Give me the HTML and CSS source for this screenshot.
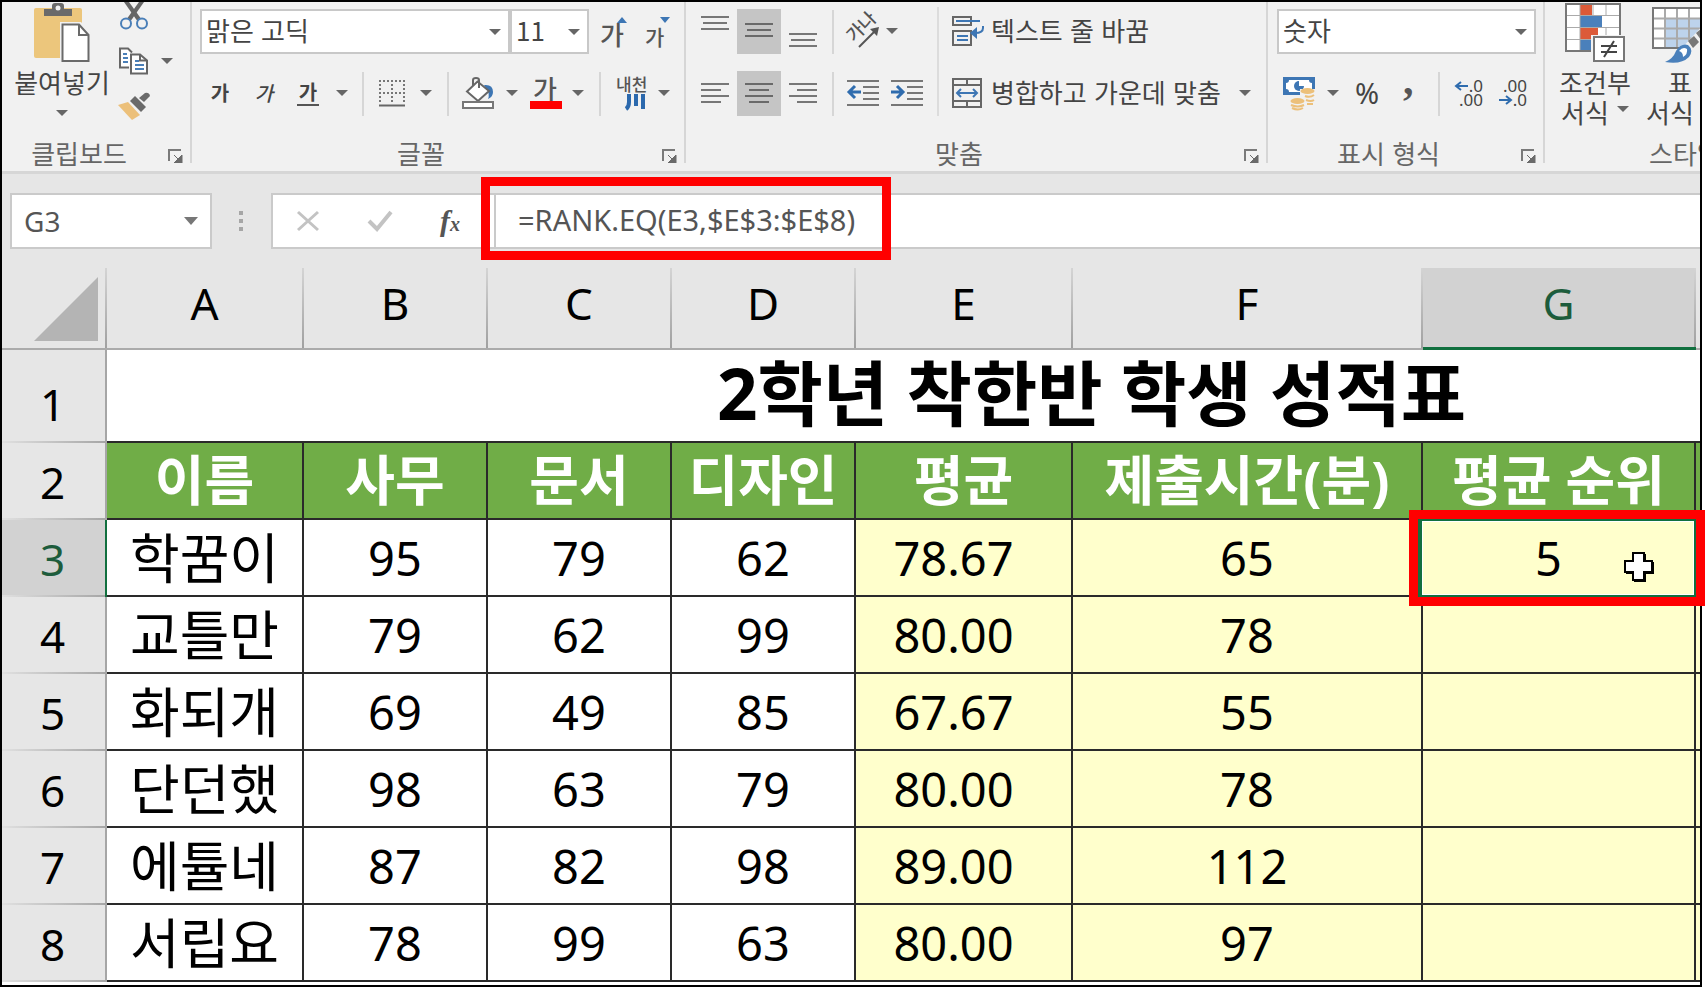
FILE: index.html
```html
<!DOCTYPE html>
<html lang="ko">
<head>
<meta charset="utf-8">
<title>2학년 착한반 학생 성적표</title>
<link rel="stylesheet" href="styles.css">
</head>
<body>
<svg class="defs" aria-hidden="true">
  <symbol id="caret" viewBox="0 0 12 6"><path d="M0 0h12l-6 6z" fill="#666"/></symbol>
  <symbol id="launcher" viewBox="0 0 15 14"><path d="M1 12V1h12" fill="none" stroke="#7a7a7a" stroke-width="2"/><path d="M6 6l6 6M14 6v8H6z" fill="#6a6a6a" stroke="#6a6a6a"/></symbol>
</svg>
<main class="window">
  <header class="ribbon">
    <section class="group group-clipboard">
      <div class="group-body">
        <button class="big paste">
          <svg width="56" height="60" viewBox="0 0 56 60">
            <rect x="0" y="6" width="48" height="50" rx="2" fill="#ecc67c"/>
            <path d="M10 14V7h8V4q0-3 3-3h6q3 0 3 3v3h8v7z" fill="#6a6a6a"/><circle cx="24" cy="6" r="2.5" fill="#f1f1f1"/>
            <path d="M26 20h21l10 11v29H26z" fill="#f1f1f1"/>
            <path d="M28.500 22.500H45l9.500 10.500v26h-26z" fill="#fff" stroke="#6a6a6a" stroke-width="2"/>
            <path d="M45 22.500V33h9.500" fill="none" stroke="#6a6a6a" stroke-width="2"/>
          </svg>
          <span>붙여넣기</span>
          <svg class="caret"><use href="#caret"/></svg>
        </button>
        <div class="small-stack">
          <button class="line" aria-label="잘라내기">
            <svg width="32" height="28" viewBox="0 0 32 28"><path d="M6 0h5l13 18-4 2z" fill="#666"/><path d="M26 0h-5L8 18l4 2z" fill="#666"/><circle cx="8" cy="21.500" r="5" fill="#f1f1f1" stroke="#4a7fb8" stroke-width="2"/><circle cx="24" cy="21.500" r="5" fill="#f1f1f1" stroke="#4a7fb8" stroke-width="2"/></svg>
          </button>
          <button class="line" aria-label="복사">
            <svg width="32" height="28" viewBox="0 0 32 28"><path d="M11 20.500H2V1.500h8l4 4" fill="#fff" stroke="#666" stroke-width="2"/><path d="M13 7.500h9l7 6v13H13z" fill="#fff" stroke="#666" stroke-width="2"/><path d="M22 7.500v6h7" fill="none" stroke="#666" stroke-width="2"/><path d="M5 7h4M5 11h5M5 15h5M17 14h4M17 18h9M17 22h9" stroke="#4a7fb8" stroke-width="2"/></svg>
            <svg class="caret"><use href="#caret"/></svg>
          </button>
          <button class="line" aria-label="서식 복사">
            <svg width="32" height="28" viewBox="0 0 32 28"><path d="M0 13l10-3 12 13-8 5z" fill="#ecc07a"/><path d="M12 9l5-5 11 11-5 5z" fill="#6a6a6a"/><path d="M21 6l6-5q4-1 5 3l-6 6z" fill="#6a6a6a"/></svg>
          </button>
        </div>
      </div>
      <footer class="group-foot"><span>클립보드</span><button class="launch" aria-label="클립보드 옵션"><svg width="15" height="14"><use href="#launcher"/></svg></button></footer>
    </section>

    <section class="group group-font">
      <div class="group-body rows">
        <div class="row">
          <div class="combo combo-font"><select aria-label="글꼴"><option>맑은 고딕</option></select><svg class="caret"><use href="#caret"/></svg></div>
          <div class="combo combo-size"><select aria-label="글꼴 크기"><option>11</option></select><svg class="caret"><use href="#caret"/></svg></div>
          <button class="w48" aria-label="글꼴 크기 크게"><svg width="32" height="34" viewBox="0 0 32 34"><text x="3" y="31" font-size="26" class="glyph">가</text><path d="M20 9h10l-5-6z" fill="#3d76b4"/></svg></button>
          <button class="w40" aria-label="글꼴 크기 작게"><svg width="32" height="34" viewBox="0 0 32 34"><text x="4" y="31" font-size="21" class="glyph">가</text><path d="M19 3h10l-5 6z" fill="#3d76b4"/></svg></button>
        </div>
        <div class="row">
          <button class="w40 ga bold" aria-label="굵게">가</button>
          <button class="w48 ga italic" aria-label="기울임꼴">가</button>
          <button class="w40 ga bold" aria-label="밑줄"><span class="underlined">가</span></button>
          <button class="w28" aria-label="밑줄 종류"><svg class="caret"><use href="#caret"/></svg></button>
          <i class="bar w14"></i>
          <button class="w44" aria-label="테두리"><svg width="28" height="28" viewBox="0 0 28 28"><path d="M1 2h26M1 14h26M2 1v22M14 1v22M26 1v22" fill="none" stroke="#777" stroke-width="2" stroke-dasharray="2 2"/><path d="M1 26.500h26" stroke="#666" stroke-width="2"/></svg></button>
          <button class="w24" aria-label="테두리 종류"><svg class="caret"><use href="#caret"/></svg></button>
          <i class="bar w20"></i>
          <button class="w40" aria-label="채우기 색"><svg width="32" height="32" viewBox="0 0 32 32"><path d="M22 8q9-1 9 7 0 5-5 7 2-5-1-9z" fill="#3d76b4"/><path d="M5 14.500L15.500 4.500 27 14 16 24z" fill="#fff" stroke="#666" stroke-width="2"/><path d="M11 9V3q0-2 3-2t3 2v8" fill="none" stroke="#666" stroke-width="2"/><rect x="1" y="25" width="30" height="6" fill="#fff" stroke="#777" stroke-width="2"/></svg></button>
          <button class="w28" aria-label="채우기 색 선택"><svg class="caret"><use href="#caret"/></svg></button>
          <button class="w40" aria-label="글꼴 색"><svg width="32" height="32" viewBox="0 0 32 32"><text x="3" y="22" font-size="26" class="glyph">가</text><rect y="24" width="32" height="8" fill="#f00"/></svg></button>
          <button class="w24" aria-label="글꼴 색 선택"><svg class="caret"><use href="#caret"/></svg></button>
          <i class="bar w20"></i>
          <button class="w44" aria-label="윗주 필드"><svg width="32" height="34" viewBox="0 0 32 34"><text x="0" y="15" font-size="17" class="glyph">내천</text><path d="M13 18v8q0 5-3 7M20 18v12M27 18v15" fill="none" stroke="#2c69ad" stroke-width="4"/></svg></button>
          <button class="w20" aria-label="윗주 옵션"><svg class="caret"><use href="#caret"/></svg></button>
        </div>
      </div>
      <footer class="group-foot"><span>글꼴</span><button class="launch" aria-label="글꼴 옵션"><svg width="15" height="14"><use href="#launcher"/></svg></button></footer>
    </section>

    <section class="group group-align">
      <div class="group-body">
        <div class="rows">
          <div class="row">
            <button class="w44" aria-label="위쪽 맞춤"><svg width="28" height="34" viewBox="0 0 28 34"><path d="M0 3h28M2 9h24M0 15h28" stroke="#777" stroke-width="2"/></svg></button>
            <button class="w44 pressed" aria-label="가운데 맞춤"><svg width="28" height="34" viewBox="0 0 28 34"><path d="M0 10h28M2 16h24M0 22h28" stroke="#6a6a6a" stroke-width="2"/></svg></button>
            <button class="w44" aria-label="아래쪽 맞춤"><svg width="28" height="34" viewBox="0 0 28 34"><path d="M0 20h28M2 26h24M0 32h28" stroke="#777" stroke-width="2"/></svg></button>
            <i class="bar w16"></i>
            <button class="w44" aria-label="방향"><svg width="36" height="34" viewBox="0 0 36 34"><text x="0" y="0" font-size="18" class="glyph" transform="translate(9 29) rotate(-45)">가나</text><path d="M14 33L32 15" stroke="#555" stroke-width="2"/><path d="M25 15l9-2-2 9z" fill="#555"/></svg></button>
            <button class="w14" aria-label="방향 선택"><svg class="caret"><use href="#caret"/></svg></button>
          </div>
          <div class="row">
            <button class="w44" aria-label="왼쪽 맞춤"><svg width="28" height="24" viewBox="0 0 28 24"><path d="M0 3h28M0 9h20M0 15h28M0 21h20" stroke="#777" stroke-width="2"/></svg></button>
            <button class="w44 pressed" aria-label="가로 가운데 맞춤"><svg width="28" height="24" viewBox="0 0 28 24"><path d="M0 3h28M4 9h20M0 15h28M4 21h20" stroke="#6a6a6a" stroke-width="2"/></svg></button>
            <button class="w44" aria-label="오른쪽 맞춤"><svg width="28" height="24" viewBox="0 0 28 24"><path d="M0 3h28M8 9h20M0 15h28M8 21h20" stroke="#777" stroke-width="2"/></svg></button>
            <i class="bar w16"></i>
            <button class="w44" aria-label="내어쓰기"><svg width="32" height="28" viewBox="0 0 32 28"><path d="M0 2h32M16 8h16M16 14h16M16 20h16M0 26h32" stroke="#777" stroke-width="2"/><path d="M14 13H3M8 7l-6 6 6 6" fill="none" stroke="#2f6cae" stroke-width="3"/></svg></button>
            <button class="w44" aria-label="들여쓰기"><svg width="32" height="28" viewBox="0 0 32 28"><path d="M0 2h32M16 8h16M16 14h16M16 20h16M0 26h32" stroke="#777" stroke-width="2"/><path d="M0 13h11M6 7l6 6-6 6" fill="none" stroke="#2f6cae" stroke-width="3"/></svg></button>
          </div>
        </div>
        <div class="rows labelled">
          <button class="row">
            <svg width="33" height="32" viewBox="0 0 33 32"><path d="M1 2h18v8H1zM1 16h18v14H1z" fill="none" stroke="#666" stroke-width="2"/><path d="M4 6h24M5 21h11M5 25h11" stroke="#3d76b4" stroke-width="2"/><path d="M31 11v2q0 5-8 5" fill="none" stroke="#3d76b4" stroke-width="2"/><path d="M18 18l7-6v12z" fill="#3d76b4"/></svg>
            <span>텍스트 줄 바꿈</span>
          </button>
          <button class="row">
            <svg width="33" height="32" viewBox="0 0 33 32"><path d="M1 2h28v28H1zM1 8h28M1 24h28M15 2v6M15 24v6" fill="none" stroke="#666" stroke-width="2"/><path d="M5 16h20M9 12l-4 4 4 4M21 12l4 4-4 4" fill="none" stroke="#3d76b4" stroke-width="2"/></svg>
            <span>병합하고 가운데 맞춤</span>
            <svg class="caret"><use href="#caret"/></svg>
          </button>
        </div>
      </div>
      <footer class="group-foot"><span>맞춤</span><button class="launch" aria-label="맞춤 옵션"><svg width="15" height="14"><use href="#launcher"/></svg></button></footer>
    </section>

    <section class="group group-number">
      <div class="group-body rows">
        <div class="row">
          <div class="combo combo-number"><select aria-label="표시 형식"><option>숫자</option></select><svg class="caret"><use href="#caret"/></svg></div>
        </div>
        <div class="row">
          <button class="w44" aria-label="회계 표시 형식"><svg width="32" height="34" viewBox="0 0 32 34"><rect y="1" width="32" height="18" fill="#3d76b4"/><path d="M6 4h20q0 3 3 3v6q-3 0-3 3H6q0-3-3-3V7q3 0 3-3z" fill="#fff"/><circle cx="16" cy="10" r="5" fill="#3d76b4"/><path d="M16 10V4h6v6z" fill="#fff"/><path d="M17 13h15v8H17z" fill="#f1f1f1"/><ellipse cx="24.500" cy="15" rx="7" ry="3" fill="#ecc07a"/><ellipse cx="14.500" cy="25" rx="7" ry="3" fill="#ecc07a"/><path d="M22 20q5 2 9-1M23 24q5 2 8 0M24 28h6M8 29q7 3 13 0M9 32q6 3 11 0" fill="none" stroke="#ecc07a" stroke-width="2"/></svg></button>
          <button class="w24" aria-label="회계 형식 선택"><svg class="caret"><use href="#caret"/></svg></button>
          <button class="w44 percent" aria-label="백분율">%</button>
          <button class="w40" aria-label="쉼표 스타일"><svg width="16" height="32" viewBox="0 0 16 32"><text x="2" y="17" class="comma">,</text></svg></button>
          <i class="bar w20"></i>
          <button class="w40" aria-label="자릿수 늘림"><svg width="32" height="32" viewBox="0 0 32 32"><text x="30" y="15" class="digits">.0</text><text x="30" y="29" class="digits">.00</text><path d="M15 9H4M8 5L3 9l5 4" fill="none" stroke="#2f6cae" stroke-width="2"/></svg></button>
          <button class="w48" aria-label="자릿수 줄임"><svg width="32" height="32" viewBox="0 0 32 32"><text x="30" y="15" class="digits">.00</text><text x="30" y="29" class="digits">.0</text><path d="M2 23h11M9 19l5 4-5 4" fill="none" stroke="#2f6cae" stroke-width="2"/></svg></button>
        </div>
      </div>
      <footer class="group-foot"><span>표시 형식</span><button class="launch" aria-label="표시 형식 옵션"><svg width="15" height="14"><use href="#launcher"/></svg></button></footer>
    </section>

    <section class="group group-style">
      <div class="group-body">
        <button class="big">
          <svg width="60" height="60" viewBox="0 0 60 60"><rect x="1" y="2" width="54" height="47" fill="#fff"/><path d="M15 2h12v11H15zM15 26h18v11H15z" fill="#dc5a38"/><path d="M15 14h22v11H15zM15 38h12v11H15z" fill="#4a80bb"/><path d="M1 13.500h54M1 25.500h54M1 37.500h54M15 2v47M41 2v12M41 25v12M28 2v12" fill="none" stroke="#aaa" stroke-width="1"/><rect x="1" y="2" width="54" height="47" fill="none" stroke="#777" stroke-width="2"/><rect x="26" y="33" width="34" height="27" fill="#f1f1f1"/><rect x="29" y="35" width="30" height="24" fill="#fff" stroke="#777" stroke-width="2"/><path d="M36 44h16M36 50h16M49 39l-10 16" stroke="#444" stroke-width="2"/></svg>
          <span>조건부</span>
          <span class="with-caret">서식<svg class="caret"><use href="#caret"/></svg></span>
        </button>
        <button class="big table-style">
          <svg width="72" height="60" viewBox="-8 0 72 60"><rect x="1" y="6" width="62" height="40" fill="#fff"/><path d="M13 16h50v30H13z" fill="#bdd3ec"/><path d="M1 16.500h62M1 26.500h62M1 36.500h62M13 6v40M25 6v40M37 6v40M49 6v40" stroke="#aaa" stroke-width="2"/><rect x="1" y="6" width="62" height="40" fill="none" stroke="#777" stroke-width="2"/><path d="M28 48L54 20v28z" fill="#f1f1f1"/><path d="M36 39l6-5 5 6-6 6zM44 31l12-10v11l-7 6z" fill="#777"/><path d="M13 60q8-3 11-11 5-8 12-6 6 5 1 12-8 8-24 5z" fill="#4a80bb"/><path d="M27 49q4-5 8-2 1 5-4 8 0-5-4-6z" fill="#fff"/></svg>
          <span>표</span>
          <span class="with-caret">서식<svg class="caret"><use href="#caret"/></svg></span>
        </button>
      </div>
      <footer class="group-foot"><span>스타일</span></footer>
    </section>
  </header>

  <div class="formula-bar">
    <div class="name-box"><input type="text" value="G3" aria-label="이름 상자"><button aria-label="이름 목록"><svg width="14" height="8" viewBox="0 0 14 8"><path d="M0 0h14l-7 8z" fill="#777"/></svg></button></div>
    <svg class="grip" width="4" height="20" viewBox="0 0 4 20"><path d="M0 0h4v4H0zM0 8h4v4H0zM0 16h4v4H0z" fill="#a6a6a6"/></svg>
    <div class="entry-tools">
      <button aria-label="취소"><svg width="22" height="20" viewBox="0 0 22 20"><path d="M1 1l20 18M21 1L1 19" stroke="#c3c3c3" stroke-width="3"/></svg></button>
      <button aria-label="입력"><svg width="26" height="22" viewBox="0 0 26 22"><path d="M2 11l8 8L24 2" fill="none" stroke="#c3c3c3" stroke-width="4"/></svg></button>
      <button class="fx" aria-label="함수 삽입">f<small>x</small></button>
    </div>
    <div class="formula">
      <input type="text" value="=RANK.EQ(E3,$E$3:$E$8)" aria-label="수식 입력줄">
      <div class="mark mark-formula"></div>
    </div>
  </div>

  <table class="sheet">
    <colgroup><col class="c-head"><col class="c-a"><col class="c-b"><col class="c-b"><col class="c-b"><col class="c-e"><col class="c-f"><col class="c-g"><col class="c-h"></colgroup>
    <thead>
      <tr><th class="corner"><svg width="64" height="64" viewBox="0 0 64 64"><path d="M64 0v64H0z" fill="#b4b4b4"/></svg></th><th>A</th><th>B</th><th>C</th><th>D</th><th>E</th><th>F</th><th class="active">G</th><th></th></tr>
    </thead>
    <tbody>
      <tr class="title-row"><th>1</th><td colspan="8">2학년 착한반 학생 성적표</td></tr>
      <tr class="field-row"><th>2</th><td>이름</td><td>사무</td><td>문서</td><td>디자인</td><td>평균</td><td>제출시간(분)</td><td>평균 순위</td><td></td></tr>
      <tr><th class="active">3</th><td class="name">학꿈이</td><td>95</td><td>79</td><td>62</td><td class="calc shift">78.67</td><td class="calc">65</td><td class="calc shift selected">5<div class="selection"></div><div class="mark mark-cell"></div><svg class="cursor" width="30" height="30" viewBox="0 0 30 30"><path d="M10 2h12v8h8v12h-8v8H10v-8H2V10h8z" fill="#000"/><path d="M9 1h11v8h8v11h-8v8H9v-8H1V9h8z" fill="#fff" stroke="#000" stroke-width="2"/></svg></td><td class="calc"></td></tr>
      <tr><th>4</th><td class="name">교틀만</td><td>79</td><td>62</td><td>99</td><td class="calc shift">80.00</td><td class="calc">78</td><td class="calc"></td><td class="calc"></td></tr>
      <tr><th>5</th><td class="name">화되개</td><td>69</td><td>49</td><td>85</td><td class="calc shift">67.67</td><td class="calc">55</td><td class="calc"></td><td class="calc"></td></tr>
      <tr><th>6</th><td class="name">단던했</td><td>98</td><td>63</td><td>79</td><td class="calc shift">80.00</td><td class="calc">78</td><td class="calc"></td><td class="calc"></td></tr>
      <tr><th>7</th><td class="name">에튤네</td><td>87</td><td>82</td><td>98</td><td class="calc shift">89.00</td><td class="calc">112</td><td class="calc"></td><td class="calc"></td></tr>
      <tr><th>8</th><td class="name">서립요</td><td>78</td><td>99</td><td>63</td><td class="calc shift">80.00</td><td class="calc">97</td><td class="calc"></td><td class="calc"></td></tr>
    </tbody>
  </table>
</main>
</body>
</html>
```
FILE: styles.css
```css
* { box-sizing: border-box; }

body {
  margin: 0;
  padding-right: 3px;
  overflow: hidden;
  background: #fff;
  color: #000;
  font-family: "Noto Sans", "Noto Sans CJK KR", sans-serif;
}

.defs { display: none; }

.window {
  min-height: 100vh;
  border: 2px solid #000;
  background: #fff;
}

button, select, input {
  margin: 0;
  padding: 0;
  border: 0;
  background: none;
  color: inherit;
  font: inherit;
}

svg { display: block; flex: none; overflow: visible; }
.caret { width: 12px; height: 6px; }

/* Ribbon */
.ribbon {
  display: flex;
  height: 172px;
  overflow: hidden;
  border-bottom: 3px solid #d6d6d6;
  background: #f1f1f1;
  color: #444;
  font-family: "Noto Sans CJK KR", sans-serif;
  font-size: 26px;
  line-height: 28px;
  white-space: nowrap;
}

.group {
  position: relative;
  display: flex;
  flex: none;
  flex-direction: column;
}
.group:not(:last-child)::after {
  content: "";
  position: absolute;
  top: 0;
  right: 0;
  width: 2px;
  height: 161px;
  background: #d6d6d6;
}
.group-clipboard { width: 190px; }
.group-font { width: 494px; padding-left: 8px; }
.group-align { width: 582px; }
.group-align .group-body { padding-left: 7px; }
.group-number { width: 277px; padding-left: 9px; }
.group-style { flex: 1 1 0; min-width: 0; overflow: hidden; }

.group-body { display: flex; height: 132px; }
.rows { display: flex; flex-direction: column; gap: 17px; padding-top: 7px; }
.row { display: flex; align-items: center; height: 45px; }
.row > button, button.row { display: flex; align-items: center; justify-content: center; height: 45px; padding-bottom: 2px; }

.group-foot {
  position: relative;
  padding-right: 36px;
  color: #666;
  line-height: 38px;
  height: 37px;
  text-align: center;
}
.group-font .group-foot { margin-left: -8px; }
.group-number .group-foot { margin-left: -9px; }
.launch { position: absolute; right: 9px; bottom: 8px; }

.big {
  display: flex;
  flex-direction: column;
  align-items: center;
  flex: none;
}
.big svg:first-child { margin-bottom: 6px; }
.paste { width: 92px; margin-left: 14px; }
.paste .caret { margin-top: 14px; }
.small-stack { display: flex; flex-direction: column; gap: 17px; padding-left: 10px; }
.line { display: flex; align-items: center; gap: 11px; }

.with-caret { display: flex; align-items: center; gap: 8px; margin-top: 2px; }
.group-style .group-body { gap: 13px; padding-left: 14px; }
.group-style .group-foot { padding: 0 0 0 104px; text-align: left; }
.group-style .big { width: 72px; }

.combo { position: relative; height: 45px; }
.combo select {
  width: 100%;
  height: 100%;
  padding: 0 32px 3px 4px;
  appearance: none;
  border: 2px solid #c8c8c8;
  border-radius: 0;
  background: #fff;
}
.combo .caret { position: absolute; top: 20px; right: 9px; pointer-events: none; }
.combo-font { width: 310px; }
.combo-size { width: 79px; }
.combo-number { width: 259px; }

.w14 { width: 14px; }
.w16 { width: 16px; }
.w20 { width: 20px; }
.w24 { width: 24px; }
.w28 { width: 28px; }
.w40 { width: 40px; }
.w44 { width: 44px; }
.w48 { width: 48px; }

.bar { flex: none; height: 44px; background: linear-gradient(#d6d6d6, #d6d6d6) center / 2px 100% no-repeat; }
.pressed { background: #c5c5c5; }
.ga { font-size: 20px; line-height: 24px; }
.bold { font-weight: 700; }
.italic { font-style: italic; font-weight: 500; }
.underlined { padding: 0 2px; border-bottom: 2px solid #555; }
.glyph { fill: #555; font-weight: 500; }
.percent { font-family: "Noto Sans", sans-serif; font-size: 29px; }
.comma { fill: #555; font: 700 42px "Liberation Serif", serif; }
.digits { fill: #444; font: 17px "Noto Sans", sans-serif; text-anchor: end; }

.labelled { position: relative; margin-left: 8px; padding-left: 15px; }
.labelled::before {
  content: "";
  position: absolute;
  top: 5px;
  left: 0;
  width: 2px;
  height: 109px;
  background: #dcdcdc;
}
.labelled button.row { justify-content: flex-start; gap: 6px; }
.labelled span { padding-bottom: 2px; }
.labelled .caret { margin-left: 12px; }

/* Formula bar */
.formula-bar {
  display: flex;
  align-items: center;
  height: 94px;
  padding: 0 0 0 8px;
  background: #e6e6e6;
  color: #555;
  font-size: 28px;
}
.name-box, .entry-tools, .formula { height: 56px; border: 2px solid #cacaca; background: #fff; }
.name-box { display: flex; align-items: center; width: 202px; padding: 0 12px; }
.name-box input { flex: 1; min-width: 0; }
.grip { margin: 0 28px 0 27px; }
.entry-tools { display: flex; align-items: center; justify-content: space-between; width: 223px; padding: 0 34px 0 24px; border-right: 0; }
.fx { font: italic 700 30px "Liberation Serif", serif; }
.fx small { font-size: 20px; }
.formula { position: relative; flex: 1; border-right: 0; }
.formula input { width: 100%; height: 100%; padding: 0 22px 4px; font-size: 29px; }

.mark { position: absolute; border: 9px solid #f00; pointer-events: none; }
.mark-formula { top: -18px; bottom: -13px; left: -15px; width: 410px; }
.mark-cell { top: -10px; right: -11px; bottom: -11px; left: -14px; }

/* Worksheet */
.sheet {
  width: 100%;
  table-layout: fixed;
  border-collapse: separate;
  border-spacing: 0;
  font-size: 47px;
  line-height: 64px;
  text-align: center;
  white-space: nowrap;
}
.c-head { width: 105px; }
.c-a { width: 197px; }
.c-b { width: 184px; }
.c-e { width: 217px; }
.c-f { width: 350px; }
.c-g { width: 273px; }
.c-h { width: 4px; }

.sheet th, .sheet td { padding: 0; }
.sheet th { padding-right: 2px; background-color: #e6e6e6; font-weight: 400; }

.sheet thead th {
  height: 82px;
  padding-bottom: 10px;
  border-bottom: 2px solid #ababab;
  background-image: linear-gradient(#d4d4d4, #a0a0a0);
  background-position: right;
  background-size: 2px 100%;
  background-repeat: no-repeat;
  font-size: 44px;
}
.sheet thead th:last-child { background-image: none; }
.sheet thead .corner { padding: 8px 8px 6px 32px; }
.sheet th.active { background-color: #d2d2d2; color: #1d5c3c; }
.sheet thead th.active { border-bottom: 3px solid #11703f; }

.sheet tbody th {
  border-right: 2px solid #a6a6a6;
  background-image: linear-gradient(to right, #e0e0e0, #a6a6a6);
  background-position: bottom;
  background-size: 100% 2px;
  background-repeat: no-repeat;
  font-size: 44px;
}
.sheet tbody th.active { border-right-color: #11703f; }
.sheet tbody td {
  height: 77px;
  border-right: 2px solid #2a2a2a;
  border-bottom: 2px solid #2a2a2a;
}
.sheet tbody td:last-child { border-right: 0; }

.sheet .title-row th { padding-top: 14px; }
.sheet .title-row td {
  height: 93px;
  padding-bottom: 6px;
  padding-left: 376px;
  font-size: 71px;
  font-weight: 700;
  line-height: 84px;
}
.sheet .field-row td { padding-bottom: 2px; background: #70ad47; color: #fff; font-size: 54px; font-weight: 700; }
.sheet .name { font-size: 54px; }
.sheet .calc { background: #ffc; }
.sheet .shift { padding-right: 20px; }
.sheet .selected { position: relative; }
.selection { position: absolute; inset: -1px -2px -2px -5px; border: 2px solid #11703f; border-left-width: 4px; box-shadow: inset 0 0 0 1px #fff; }
.cursor { position: absolute; top: 32px; right: 40px; }
```
